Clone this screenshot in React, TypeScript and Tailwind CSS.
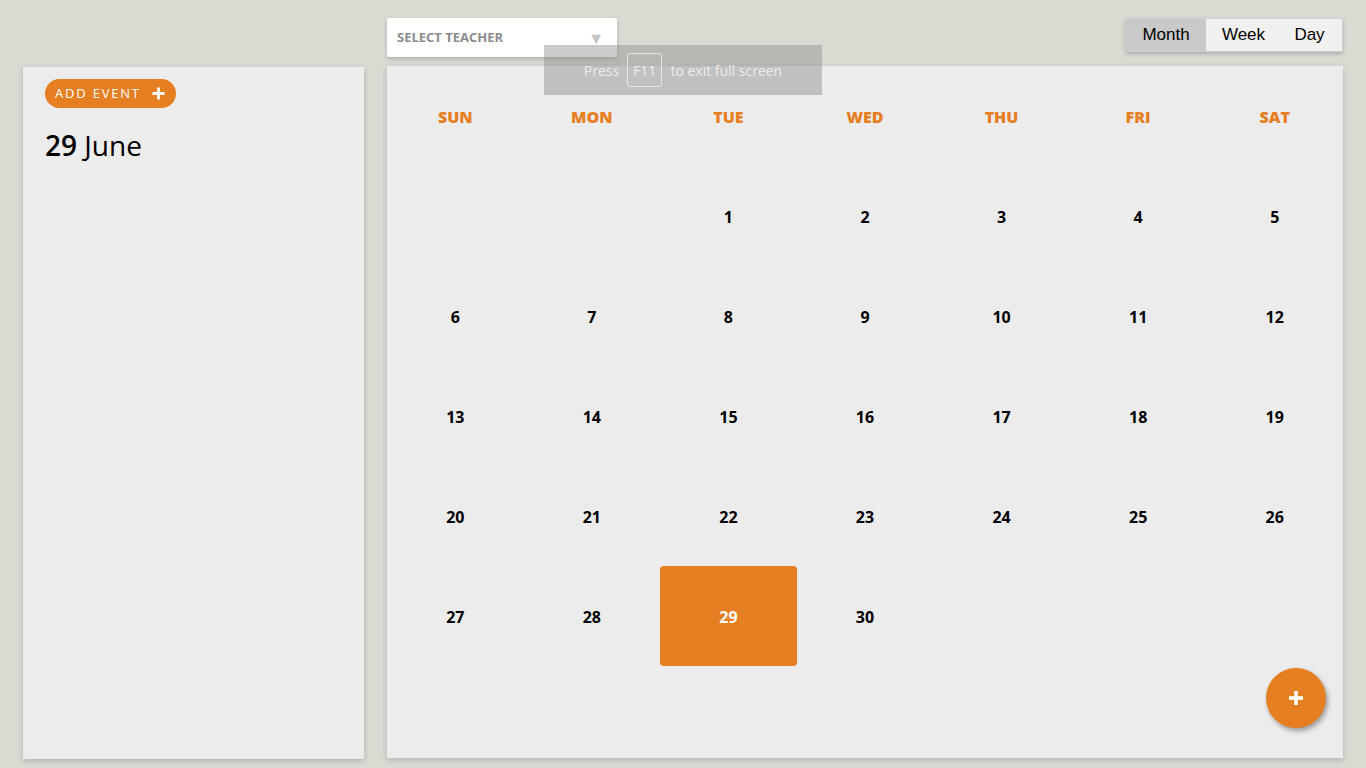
import React from 'react';

const DAYS = ['SUN', 'MON', 'TUE', 'WED', 'THU', 'FRI', 'SAT'];

// June starts on a Tuesday
const cells: (number | null)[] = [
  null, null,
  ...Array.from({ length: 30 }, (_, i) => i + 1),
];
while (cells.length < 35) cells.push(null);

const SELECTED = 29;

const App: React.FC = () => {
  return (
    <div className="relative min-h-screen w-full bg-[#dadad3] font-['Open_Sans',sans-serif] overflow-hidden">
      <div className="flex gap-[23px] pl-[23px] pr-[23px]">
        {/* Sidebar */}
        <div className="w-[341px] pt-[67px]">
          <div className="h-[692px] bg-[#ececec] shadow-[0_2px_6px_rgba(0,0,0,0.18)] px-[22px] pt-[12px]">
            <button className="flex items-center gap-[11px] h-[29px] pl-[10px] pr-[11px] rounded-full bg-[#e67e22] text-white text-[13px] tracking-[1.8px] leading-none">
              <span>ADD EVENT</span>
              <svg width="13" height="13" viewBox="0 0 13 13">
                <path d="M6.5 0.5v12M0.5 6.5h12" stroke="white" strokeWidth="2.8" />
              </svg>
            </button>
            <div className="mt-[23px] text-[28px] leading-none text-black">
              <span className="font-semibold">29</span> June
            </div>
          </div>
        </div>

        {/* Main */}
        <div className="flex-1 flex flex-col">
          <div className="flex justify-between items-start pt-[18px] h-[66px]">
            <div className="w-[230px] h-[39px] bg-white rounded-[2px] shadow-[0_2px_4px_rgba(0,0,0,0.2)] flex items-center justify-between pl-[10px] pr-[13px] pt-[1px]">
              <span className="text-[13px] font-bold text-[#8c8c8c]">SELECT TEACHER</span>
              <span className="text-[16px] text-[#c4c4c4]">▼</span>
            </div>
            <div className="flex h-[34px] border border-[#cfcfcf] shadow-[0_2px_4px_rgba(0,0,0,0.2)] font-['Liberation_Sans',sans-serif] text-[17px] text-black">
              <div className="w-[80px] bg-[#c9c9c9] flex items-center justify-center">Month</div>
              <div className="w-[75px] bg-[#f0f0f0] flex items-center justify-center">Week</div>
              <div className="w-[61px] bg-[#f0f0f0] flex items-center justify-center pr-[4px]">Day</div>
            </div>
          </div>
          <div className="relative h-[692px] bg-[#ececec] shadow-[0_2px_6px_rgba(0,0,0,0.18)]">
            <div className="grid grid-cols-7">
              {DAYS.map((d) => (
                <div key={d} className="h-[100px] flex items-center justify-center pt-[1px] text-[16px] font-extrabold text-[#e67e22]">
                  {d}
                </div>
              ))}
              {cells.map((n, i) => (
                <div key={i} className="h-[100px] flex items-center justify-center">
                  {n !== null && (
                    n === SELECTED ? (
                      <div className="w-full h-full rounded-[4px] bg-[#e67e22] text-white font-bold text-[16px] flex items-center justify-center pt-[1px]">
                        {n}
                      </div>
                    ) : (
                      <span className="font-bold text-[16px] text-black pt-[2px]">{n}</span>
                    )
                  )}
                </div>
              ))}
            </div>
            <button className="absolute right-[17px] bottom-[30px] w-[60px] h-[60px] rounded-full bg-[#e67e22] shadow-[2px_3px_5px_rgba(0,0,0,0.35)] flex items-center justify-center">
              <svg width="16" height="16" viewBox="0 0 16 16">
                <path d="M8 1v14M1 8h14" stroke="white" strokeWidth="3.5" />
              </svg>
            </button>
          </div>
        </div>
      </div>

      {/* Fullscreen hint overlay */}
      <div className="absolute left-[544px] top-[45px] w-[278px] h-[50px] bg-[rgba(140,140,140,0.45)] flex items-center justify-center gap-[8px] text-[14px] text-[#ededed] font-['Open_Sans',sans-serif]">
        <span>Press</span>
        <span className="border border-[#ededed]/80 rounded-[3px] px-[5px] h-[34px] flex items-center">F11</span>
        <span>to exit full screen</span>
      </div>
    </div>
  );
};

export default App;
